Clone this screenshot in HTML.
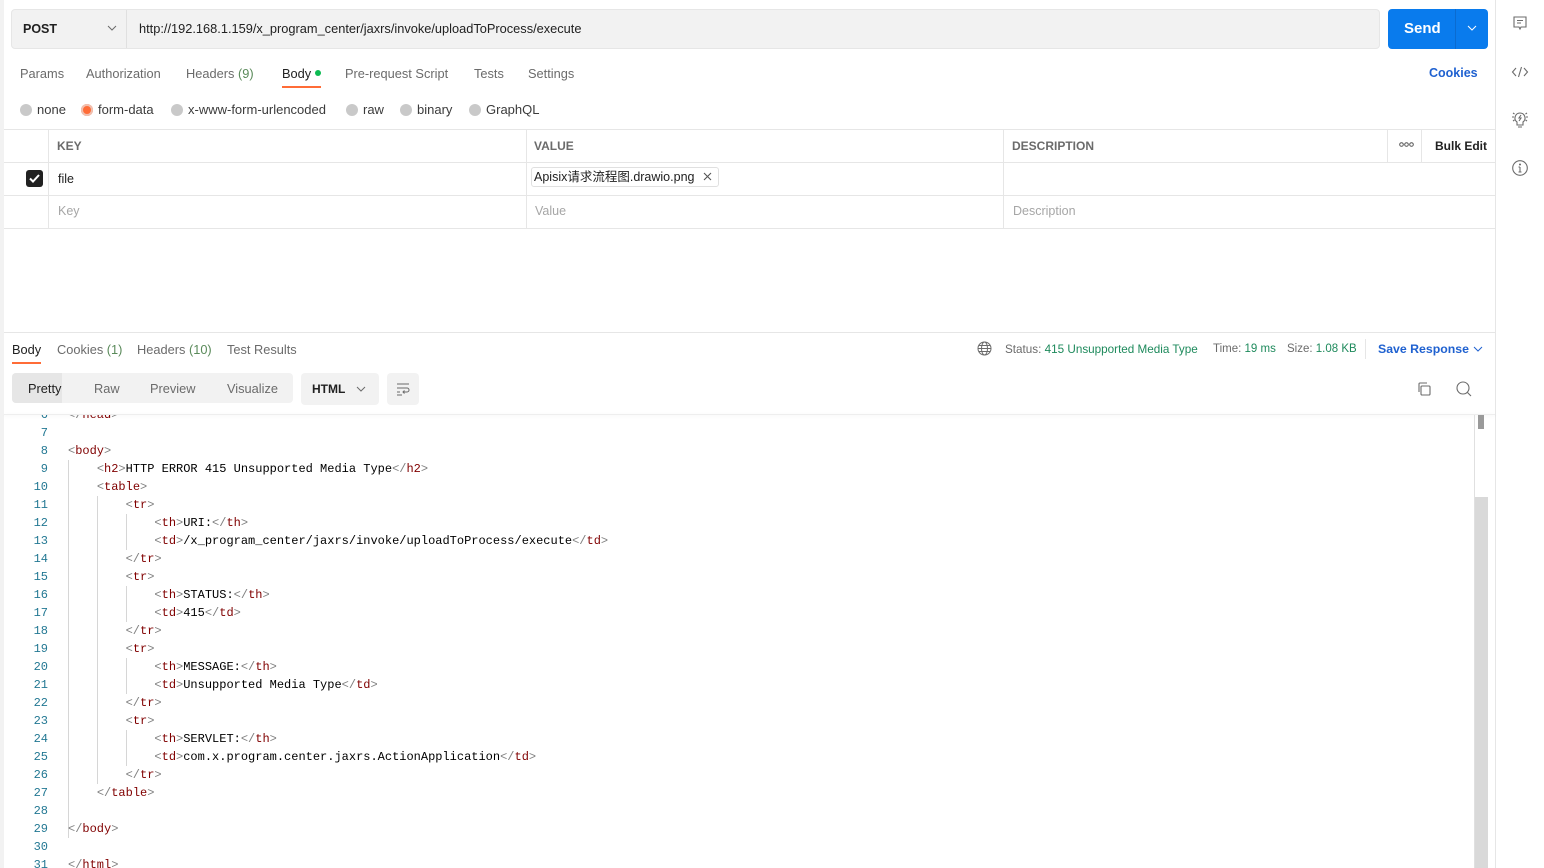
<!DOCTYPE html>
<html><head><meta charset="utf-8"><style>
*{box-sizing:border-box;margin:0;padding:0}
body{width:1544px;height:868px;overflow:hidden;background:#fff;font-family:"Liberation Sans","Noto Sans CJK SC",sans-serif;font-size:12px;color:#212121;position:relative}
.a{position:absolute;white-space:nowrap}
.g{color:#6b6b6b}
.code{position:absolute;left:4px;top:415px;width:1470px;height:453px;overflow:hidden}
.ln{position:absolute;left:0;width:44px;text-align:right;color:#237893;font-family:"Liberation Mono",monospace;font-size:12px;line-height:18px}
.cl{position:absolute;left:64px;font-family:"Liberation Mono",monospace;font-size:12px;line-height:18px;color:#000;white-space:pre}
.b{color:#808080}.t{color:#800000}
.guide{position:absolute;width:1px;background:#d6d6d6}
.radio{display:inline-block;width:12px;height:12px;border-radius:50%;background:#c9c9c9;vertical-align:-2px;margin-right:5px}
</style></head><body>
<div class="a" style="left:0;top:0;width:4px;height:868px;background:#f2f2f2"></div>
<div class="a" style="left:1495px;top:0;width:1px;height:868px;background:#e6e6e6"></div>
<svg class="a" style="left:1512px;top:15px" width="16" height="16" viewBox="0 0 16 16" fill="none" stroke="#6b6b6b" stroke-width="1.1"><path d="M2 2h12v10H9l-1 2-1-2H2z"/><path d="M5 5.5h6M5 8h4"/></svg>
<svg class="a" style="left:1511px;top:64px" width="18" height="16" viewBox="0 0 18 16" fill="none" stroke="#6b6b6b" stroke-width="1.1"><path d="M5 4L1.5 8 5 12M13 4l3.5 4L13 12M10.5 3l-3 10"/></svg>
<svg class="a" style="left:1511px;top:110px" width="18" height="20" viewBox="0 0 18 20" fill="none" stroke="#6b6b6b" stroke-width="1.1"><path d="M9 3a5 5 0 0 0-3 9v3h6v-3a5 5 0 0 0-3-9z"/><path d="M7 17h4M10 5l-2 3h2l-2 3M1 7h2M15 7h2M2 3l1.5 1M16 3l-1.5 1M2 11l1.5-1M16 11l-1.5-1"/></svg>
<svg class="a" style="left:1511px;top:159px" width="18" height="18" viewBox="0 0 18 18" fill="none" stroke="#6b6b6b" stroke-width="1.1"><circle cx="9" cy="9" r="7.3"/><path d="M9 8v5M7.5 13h3M7.5 8H9"/><circle cx="9" cy="5.5" r=".5" fill="#6b6b6b"/></svg>

<div class="a" style="left:11px;top:9px;width:1369px;height:40px;background:#f2f2f2;border:1px solid #e6e6e6;border-radius:4px"></div>
<div class="a" style="left:126px;top:10px;width:1px;height:38px;background:#e0e0e0"></div>
<div class="a" style="left:23px;top:22px;font-weight:bold;font-size:12.5px;color:#212121">POST</div>
<svg class="a" style="left:107px;top:25px" width="10" height="7" viewBox="0 0 10 7" fill="none" stroke="#6b6b6b"><path d="M1 1l4 4 4-4"/></svg>
<div class="a" style="left:139px;top:21px;font-size:12.8px;color:#212121">http://192.168.1.159/x_program_center/jaxrs/invoke/uploadToProcess/execute</div>
<div class="a" style="left:1388px;top:9px;width:100px;height:40px;background:#097bed;border-radius:4px"></div>
<div class="a" style="left:1455px;top:9px;width:1px;height:40px;background:#0a6bd0"></div>
<div class="a" style="left:1404px;top:20px;color:#fff;font-weight:bold;font-size:15px">Send</div>
<svg class="a" style="left:1467px;top:25px" width="10" height="7" viewBox="0 0 10 7" fill="none" stroke="#fff"><path d="M1 1l4 4 4-4"/></svg>

<div class="a g" style="left:20px;top:66px;font-size:12.8px">Params</div>
<div class="a g" style="left:86px;top:66px;font-size:12.8px">Authorization</div>
<div class="a g" style="left:186px;top:66px;font-size:12.8px">Headers <span style="color:#5a8a5a">(9)</span></div>
<div class="a" style="left:282px;top:66px;font-size:12.8px;color:#212121">Body <span style="display:inline-block;width:6px;height:6px;border-radius:50%;background:#0cbb52;vertical-align:2px"></span></div>
<div class="a" style="left:282px;top:86px;width:39px;height:2px;background:#ff6c37"></div>
<div class="a g" style="left:345px;top:66px;font-size:12.8px">Pre-request Script</div>
<div class="a g" style="left:474px;top:66px;font-size:12.8px">Tests</div>
<div class="a g" style="left:528px;top:66px;font-size:12.8px">Settings</div>
<div class="a" style="left:1429px;top:66px;font-size:12.5px;font-weight:bold;color:#1f61d0">Cookies</div>

<div class="a" style="left:20px;top:102px;font-size:13px;color:#3b3b3b"><span class="radio"></span>none</div>
<div class="a" style="left:81px;top:102px;font-size:13px;color:#3b3b3b"><span class="radio" style="background:#ff6c37;box-shadow:inset 0 0 0 2px #f0c0b0"></span>form-data</div>
<div class="a" style="left:171px;top:102px;font-size:13px;color:#3b3b3b"><span class="radio"></span>x-www-form-urlencoded</div>
<div class="a" style="left:346px;top:102px;font-size:13px;color:#3b3b3b"><span class="radio"></span>raw</div>
<div class="a" style="left:400px;top:102px;font-size:13px;color:#3b3b3b"><span class="radio"></span>binary</div>
<div class="a" style="left:469px;top:102px;font-size:13px;color:#3b3b3b"><span class="radio"></span>GraphQL</div>

<div class="a" style="left:4px;top:129px;width:1491px;height:1px;background:#e6e6e6"></div>
<div class="a" style="left:4px;top:162px;width:1491px;height:1px;background:#e6e6e6"></div>
<div class="a" style="left:4px;top:195px;width:1491px;height:1px;background:#e6e6e6"></div>
<div class="a" style="left:4px;top:228px;width:1491px;height:1px;background:#e6e6e6"></div>
<div class="a" style="left:48px;top:129px;width:1px;height:100px;background:#e6e6e6"></div>
<div class="a" style="left:526px;top:129px;width:1px;height:100px;background:#e6e6e6"></div>
<div class="a" style="left:1003px;top:129px;width:1px;height:100px;background:#e6e6e6"></div>
<div class="a" style="left:1387px;top:129px;width:1px;height:34px;background:#e6e6e6"></div>
<div class="a" style="left:1421px;top:129px;width:1px;height:34px;background:#e6e6e6"></div>
<div class="a" style="left:57px;top:139px;font-weight:bold;color:#6b6b6b;font-size:12px">KEY</div>
<div class="a" style="left:534px;top:139px;font-weight:bold;color:#6b6b6b;font-size:12px">VALUE</div>
<div class="a" style="left:1012px;top:139px;font-weight:bold;color:#6b6b6b;font-size:12px">DESCRIPTION</div>
<svg class="a" style="left:1399px;top:142px" width="15" height="5" viewBox="0 0 15 5" fill="none" stroke="#555" stroke-width="1"><circle cx="2.5" cy="2.5" r="1.8"/><circle cx="7.5" cy="2.5" r="1.8"/><circle cx="12.5" cy="2.5" r="1.8"/></svg>
<div class="a" style="left:1435px;top:139px;font-weight:bold;color:#212121;font-size:12px">Bulk Edit</div>
<div class="a" style="left:26px;top:170px;width:17px;height:17px;background:#212121;border-radius:3px"></div>
<svg class="a" style="left:28px;top:172px" width="13" height="13" viewBox="0 0 13 13" fill="none" stroke="#fff" stroke-width="2"><path d="M2 6.5l3 3 6-6.5"/></svg>
<div class="a" style="left:58px;top:172px;font-size:12.5px">file</div>
<div class="a" style="left:531px;top:167px;width:188px;height:20px;border:1px solid #e0e0e0;border-radius:3px"></div>
<div class="a" style="left:534px;top:169px;font-size:12.5px;line-height:17px;color:#212121">Apisix请求流程图.drawio.png</div>
<svg class="a" style="left:703px;top:172px" width="9" height="9" viewBox="0 0 9 9" stroke="#555" stroke-width="1.1"><path d="M1 1l7 7M8 1L1 8"/></svg>
<div class="a" style="left:58px;top:204px;font-size:12.5px;color:#a6a6a6">Key</div>
<div class="a" style="left:535px;top:204px;font-size:12.5px;color:#a6a6a6">Value</div>
<div class="a" style="left:1013px;top:204px;font-size:12.5px;color:#a6a6a6">Description</div>

<div class="a" style="left:4px;top:332px;width:1491px;height:1px;background:#e6e6e6"></div>
<div class="a" style="left:12px;top:342px;font-size:12.8px;color:#212121">Body</div>
<div class="a" style="left:12px;top:362px;width:29px;height:2px;background:#ff6c37"></div>
<div class="a g" style="left:57px;top:342px;font-size:12.8px">Cookies <span style="color:#5a8a5a">(1)</span></div>
<div class="a g" style="left:137px;top:342px;font-size:12.8px">Headers <span style="color:#5a8a5a">(10)</span></div>
<div class="a g" style="left:227px;top:342px;font-size:12.8px">Test Results</div>
<svg class="a" style="left:977px;top:341px" width="15" height="15" viewBox="0 0 15 15" fill="none" stroke="#6b6b6b" stroke-width="1"><circle cx="7.5" cy="7.5" r="6.5"/><ellipse cx="7.5" cy="7.5" rx="3" ry="6.5"/><path d="M1 7.5h13M2 4.5h11M2 10.5h11"/></svg>
<div class="a" style="left:1005px;top:343px;font-size:11.7px;color:#6b6b6b">Status: <span style="color:#1e8a5c">415 Unsupported Media Type</span></div>
<div class="a" style="left:1213px;top:343px;font-size:11.5px;color:#6b6b6b">Time: <span style="color:#1e8a5c">19 ms</span></div>
<div class="a" style="left:1287px;top:343px;font-size:11.5px;color:#6b6b6b">Size: <span style="color:#1e8a5c">1.08 KB</span></div>
<div class="a" style="left:1365px;top:339px;width:1px;height:20px;background:#e6e6e6"></div>
<div class="a" style="left:1378px;top:342px;font-size:12.3px;color:#1f61d0;font-weight:bold">Save Response</div>
<svg class="a" style="left:1473px;top:346px" width="10" height="7" viewBox="0 0 10 7" fill="none" stroke="#1f61d0"><path d="M1 1l4 4 4-4"/></svg>

<div class="a" style="left:12px;top:373px;width:281px;height:30px;background:#f2f2f2;border-radius:4px"></div>
<div class="a" style="left:12px;top:373px;width:50px;height:30px;background:#e6e6e6;border-radius:4px 0 0 4px"></div>
<div class="a" style="left:28px;top:381px;font-size:12.8px;color:#212121">Pretty</div>
<div class="a g" style="left:94px;top:381px;font-size:12.8px">Raw</div>
<div class="a g" style="left:150px;top:381px;font-size:12.8px">Preview</div>
<div class="a g" style="left:227px;top:381px;font-size:12.8px">Visualize</div>
<div class="a" style="left:301px;top:373px;width:78px;height:32px;background:#f2f2f2;border-radius:4px"></div>
<div class="a" style="left:312px;top:382px;font-size:12px;font-weight:bold;color:#212121">HTML</div>
<svg class="a" style="left:356px;top:386px" width="10" height="7" viewBox="0 0 10 7" fill="none" stroke="#6b6b6b"><path d="M1 1l4 4 4-4"/></svg>
<div class="a" style="left:387px;top:373px;width:32px;height:32px;background:#f2f2f2;border-radius:4px"></div>
<svg class="a" style="left:395px;top:381px" width="16" height="16" viewBox="0 0 16 16" fill="none" stroke="#6b6b6b" stroke-width="1"><path d="M2 3h12M2 7h10a2 2 0 0 1 0 4H8M9.5 9.5L8 11l1.5 1.5M2 11h3M2 14h5"/></svg>
<svg class="a" style="left:1416px;top:381px" width="16" height="16" viewBox="0 0 16 16" fill="none" stroke="#6b6b6b" stroke-width="1.1"><rect x="5" y="5" width="9" height="9" rx="1"/><path d="M3 11V3a1 1 0 0 1 1-1h7"/></svg>
<svg class="a" style="left:1455px;top:380px" width="18" height="18" viewBox="0 0 18 18" fill="none" stroke="#6b6b6b" stroke-width="1.1"><circle cx="8" cy="8" r="6"/><path d="M12.5 12.5L16 16"/></svg>
<div class="a" style="left:4px;top:414px;width:1491px;height:1px;background:#eee;box-shadow:0 1px 3px rgba(0,0,0,.08)"></div>

<div class="a" style="left:1474px;top:415px;width:1px;height:453px;background:#e0e0e0"></div>
<div class="a" style="left:1475px;top:497px;width:13px;height:371px;background:#d9d9d9"></div>
<div class="a" style="left:1478px;top:415px;width:6px;height:14px;background:#9a9a9a"></div>

<div class="code">
<div class="guide" style="left:64px;top:45px;height:378px"></div>
<div class="guide" style="left:93px;top:81px;height:288px"></div>
<div class="guide" style="left:122px;top:99px;height:36px"></div>
<div class="guide" style="left:122px;top:171px;height:36px"></div>
<div class="guide" style="left:122px;top:243px;height:36px"></div>
<div class="guide" style="left:122px;top:315px;height:36px"></div>
<div style="position:absolute;left:0;top:-9px">
<div class="ln" style="top:0">6</div><div class="cl" style="top:0"><span class="b">&lt;/</span><span class="t">head</span><span class="b">&gt;</span></div>
<div class="ln" style="top:18px">7</div>
<div class="ln" style="top:36px">8</div><div class="cl" style="top:36px"><span class="b">&lt;</span><span class="t">body</span><span class="b">&gt;</span></div>
<div class="ln" style="top:54px">9</div><div class="cl" style="top:54px">    <span class="b">&lt;</span><span class="t">h2</span><span class="b">&gt;</span>HTTP ERROR 415 Unsupported Media Type<span class="b">&lt;/</span><span class="t">h2</span><span class="b">&gt;</span></div>
<div class="ln" style="top:72px">10</div><div class="cl" style="top:72px">    <span class="b">&lt;</span><span class="t">table</span><span class="b">&gt;</span></div>
<div class="ln" style="top:90px">11</div><div class="cl" style="top:90px">        <span class="b">&lt;</span><span class="t">tr</span><span class="b">&gt;</span></div>
<div class="ln" style="top:108px">12</div><div class="cl" style="top:108px">            <span class="b">&lt;</span><span class="t">th</span><span class="b">&gt;</span>URI:<span class="b">&lt;/</span><span class="t">th</span><span class="b">&gt;</span></div>
<div class="ln" style="top:126px">13</div><div class="cl" style="top:126px">            <span class="b">&lt;</span><span class="t">td</span><span class="b">&gt;</span>/x_program_center/jaxrs/invoke/uploadToProcess/execute<span class="b">&lt;/</span><span class="t">td</span><span class="b">&gt;</span></div>
<div class="ln" style="top:144px">14</div><div class="cl" style="top:144px">        <span class="b">&lt;/</span><span class="t">tr</span><span class="b">&gt;</span></div>
<div class="ln" style="top:162px">15</div><div class="cl" style="top:162px">        <span class="b">&lt;</span><span class="t">tr</span><span class="b">&gt;</span></div>
<div class="ln" style="top:180px">16</div><div class="cl" style="top:180px">            <span class="b">&lt;</span><span class="t">th</span><span class="b">&gt;</span>STATUS:<span class="b">&lt;/</span><span class="t">th</span><span class="b">&gt;</span></div>
<div class="ln" style="top:198px">17</div><div class="cl" style="top:198px">            <span class="b">&lt;</span><span class="t">td</span><span class="b">&gt;</span>415<span class="b">&lt;/</span><span class="t">td</span><span class="b">&gt;</span></div>
<div class="ln" style="top:216px">18</div><div class="cl" style="top:216px">        <span class="b">&lt;/</span><span class="t">tr</span><span class="b">&gt;</span></div>
<div class="ln" style="top:234px">19</div><div class="cl" style="top:234px">        <span class="b">&lt;</span><span class="t">tr</span><span class="b">&gt;</span></div>
<div class="ln" style="top:252px">20</div><div class="cl" style="top:252px">            <span class="b">&lt;</span><span class="t">th</span><span class="b">&gt;</span>MESSAGE:<span class="b">&lt;/</span><span class="t">th</span><span class="b">&gt;</span></div>
<div class="ln" style="top:270px">21</div><div class="cl" style="top:270px">            <span class="b">&lt;</span><span class="t">td</span><span class="b">&gt;</span>Unsupported Media Type<span class="b">&lt;/</span><span class="t">td</span><span class="b">&gt;</span></div>
<div class="ln" style="top:288px">22</div><div class="cl" style="top:288px">        <span class="b">&lt;/</span><span class="t">tr</span><span class="b">&gt;</span></div>
<div class="ln" style="top:306px">23</div><div class="cl" style="top:306px">        <span class="b">&lt;</span><span class="t">tr</span><span class="b">&gt;</span></div>
<div class="ln" style="top:324px">24</div><div class="cl" style="top:324px">            <span class="b">&lt;</span><span class="t">th</span><span class="b">&gt;</span>SERVLET:<span class="b">&lt;/</span><span class="t">th</span><span class="b">&gt;</span></div>
<div class="ln" style="top:342px">25</div><div class="cl" style="top:342px">            <span class="b">&lt;</span><span class="t">td</span><span class="b">&gt;</span>com.x.program.center.jaxrs.ActionApplication<span class="b">&lt;/</span><span class="t">td</span><span class="b">&gt;</span></div>
<div class="ln" style="top:360px">26</div><div class="cl" style="top:360px">        <span class="b">&lt;/</span><span class="t">tr</span><span class="b">&gt;</span></div>
<div class="ln" style="top:378px">27</div><div class="cl" style="top:378px">    <span class="b">&lt;/</span><span class="t">table</span><span class="b">&gt;</span></div>
<div class="ln" style="top:396px">28</div>
<div class="ln" style="top:414px">29</div><div class="cl" style="top:414px"><span class="b">&lt;/</span><span class="t">body</span><span class="b">&gt;</span></div>
<div class="ln" style="top:432px">30</div>
<div class="ln" style="top:450px">31</div><div class="cl" style="top:450px"><span class="b">&lt;/</span><span class="t">html</span><span class="b">&gt;</span></div>
</div>
</div>
</body></html>
